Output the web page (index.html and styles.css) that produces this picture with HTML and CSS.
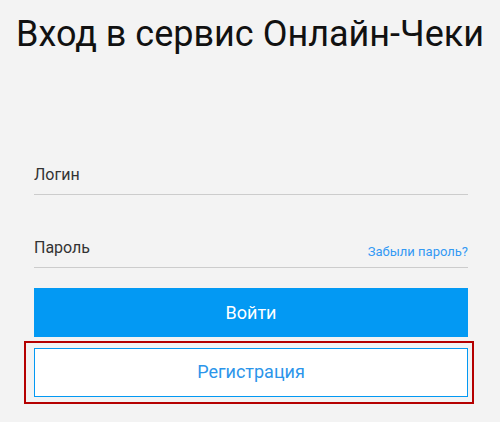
FILE: index.html
```html
<!DOCTYPE html>
<html lang="ru">
<head>
    <meta charset="UTF-8">
    <meta name="viewport" content="width=device-width, initial-scale=1.0">
    <title>Вход в сервис Онлайн-Чеки</title>
    <link rel="stylesheet" href="styles.css">
</head>
<body>
    <h1>Вход в сервис Онлайн-Чеки</h1>

    <form class="login-form" id="loginForm">
        <div class="field">
            <label for="login">Логин</label>
            <input type="text" id="login" name="login">
        </div>

        <div class="field">
            <label for="password">Пароль</label>
            <input type="password" id="password" name="password">
            <a href="#" class="forgot">Забыли пароль?</a>
        </div>

        <button type="submit" class="btn btn-primary">Войти</button>

        <div class="highlight">
            <button type="button" class="btn btn-outline">Регистрация</button>
        </div>
    </form>
</body>
</html>
```

FILE: styles.css
```css
body {
    font-family: Roboto, "Liberation Sans", sans-serif;
    background-color: #f3f3f3;
    color: #333;
    margin: 0;
    padding: 0;
}
h1 {
    font-size: 36px;
    font-weight: 400;
    color: #111;
    text-align: center;
    margin: 12px 0 0;
    line-height: 44px;
}
.login-form {
    padding: 0 32px 0 34px;
    margin-top: 99px;
}
.field {
    display: flex;
    align-items: flex-end;
    height: 39px;
    border-bottom: 1px solid #cccccc;
    position: relative;
    margin-bottom: 33px;
}
.field label {
    font-size: 16px;
    color: #333;
    padding-bottom: 10px;
}
.field input {
    position: absolute;
    inset: 0;
    border: none;
    background: transparent;
    outline: none;
    opacity: 0;
}
.forgot {
    margin-left: auto;
    font-size: 13px;
    color: #3399f3;
    text-decoration: none;
    padding-bottom: 8px;
    position: relative;
}
.btn {
    display: block;
    width: 100%;
    height: 49px;
    font-family: inherit;
    font-size: 18px;
    cursor: pointer;
    border-radius: 0;
}
.btn-primary {
    background-color: #0399f3;
    color: white;
    border: none;
    margin-top: -13px;
}
.highlight {
    border: 2px solid #b50000;
    margin: 4px -6px 0 -10px;
    padding: 5px 4px 5px 8px;
}
.btn-outline {
    background-color: white;
    color: #2b95ea;
    border: 1px solid #0399f3;
    padding-bottom: 3px;
}
```
